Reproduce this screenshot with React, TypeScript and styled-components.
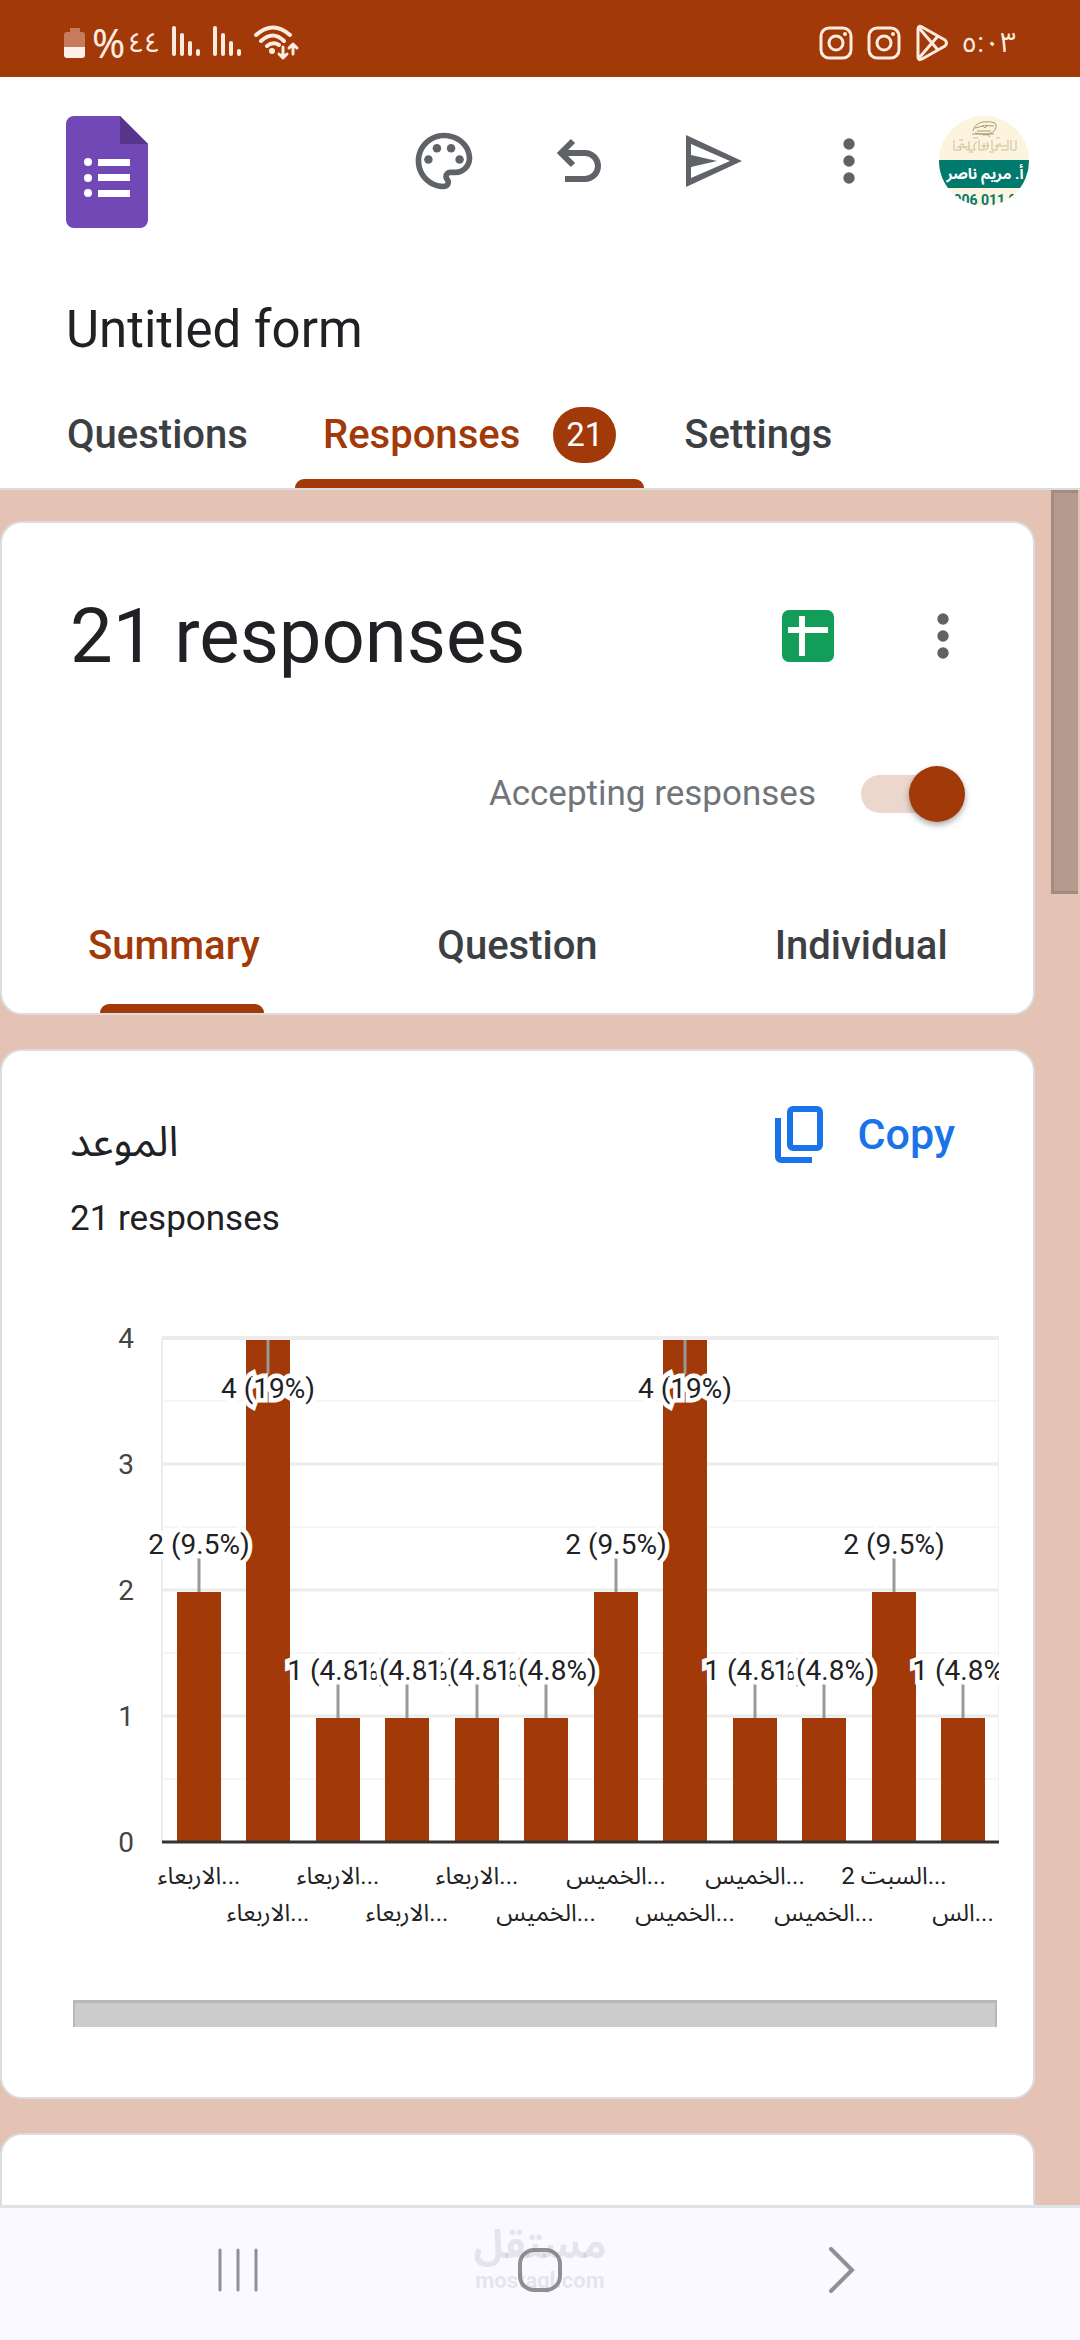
import { useState } from "react";
import styled, { createGlobalStyle, css } from "styled-components";

const colors = {
  accent: "#a23908",
  accentSoft: "#ebd7cd",
  backdrop: "#e4c3b5",
  border: "#dadce0",
  text: "#202124",
  tab: "#3c4043",
  icon: "#5f6368",
  hint: "#70757a",
  link: "#1a73e8",
  status: "#fdebe0",
  nav: "#faf9ff",
  navIcon: "#909092",
};

const fontStack = `Roboto, "Noto Sans Arabic", "Noto Naskh Arabic", "DejaVu Sans", sans-serif`;

const GlobalStyle = createGlobalStyle`
  * {
    box-sizing: border-box;
  }
  body {
    margin: 0;
    color: ${colors.text};
    font-family: ${fontStack};
  }
  h1, h2, p {
    margin: 0;
    font-weight: 400;
  }
  svg {
    display: block;
    flex-shrink: 0;
  }
`;

interface Answer {
  label: string;
  count: number;
  percent: string;
}

const answers: Answer[] = [
  { label: "الاربعاء...", count: 2, percent: "9.5%" },
  { label: "الاربعاء...", count: 4, percent: "19%" },
  { label: "الاربعاء...", count: 1, percent: "4.8%" },
  { label: "الاربعاء...", count: 1, percent: "4.8%" },
  { label: "الاربعاء...", count: 1, percent: "4.8%" },
  { label: "الخميس...", count: 1, percent: "4.8%" },
  { label: "الخميس...", count: 2, percent: "9.5%" },
  { label: "الخميس...", count: 4, percent: "19%" },
  { label: "الخميس...", count: 1, percent: "4.8%" },
  { label: "الخميس...", count: 1, percent: "4.8%" },
  { label: "السبت 2...", count: 2, percent: "9.5%" },
  { label: "الس...", count: 1, percent: "4.8%" },
];

const views = ["Summary", "Question", "Individual"];

const BatteryIcon = () => (
  <svg width="22" height="32" viewBox="0 0 22 32" aria-hidden>
    <path d="M6 1h10v4h2a3 3 0 0 1 3 3v12H0V8a3 3 0 0 1 3-3h3z" fill="#c67c5c" />
    <path d="M0 20h21v8a3 3 0 0 1-3 3H3a3 3 0 0 1-3-3z" fill="#fdf1ea" />
  </svg>
);

const SignalIcon = () => (
  <svg width="28" height="32" viewBox="0 0 28 32" aria-hidden>
    <path
      d="M2 3v26M10 10v19M18 18v11M26 26v3"
      stroke={colors.status}
      strokeWidth="4"
      strokeLinecap="round"
    />
  </svg>
);

const WifiIcon = () => (
  <svg width="46" height="36" viewBox="0 0 46 36" fill="none" aria-hidden>
    <g stroke={colors.status} strokeWidth="4" strokeLinecap="round" strokeLinejoin="round">
      <path d="M2 10Q19-5 36 10M7 16Q19 5 30 16M13 21Q19 16 25 20" />
      <path d="M29 22v10M25 29l4 4 4-4M39 29V20M35 23l4-4 4 4" strokeWidth="3" />
    </g>
    <circle cx="18" cy="26" r="3" fill={colors.status} />
  </svg>
);

const InstagramIcon = () => (
  <svg width="34" height="34" viewBox="0 0 34 34" fill="none" aria-hidden>
    <g stroke={colors.status} strokeWidth="3">
      <rect x="2" y="2" width="30" height="30" rx="8" />
      <circle cx="17" cy="17" r="7" />
    </g>
    <circle cx="26" cy="8" r="2" fill={colors.status} />
  </svg>
);

const PlayStoreIcon = () => (
  <svg width="34" height="38" viewBox="0 0 34 38" fill="none" aria-hidden>
    <path
      d="M3 5Q3 1 7 3L30 16Q33 19 30 22L7 35Q3 37 3 33ZM4 4L23 26M4 34L23 12"
      stroke={colors.status}
      strokeWidth="3"
      strokeLinejoin="round"
    />
  </svg>
);

const FormsLogo = () => (
  <svg width="82" height="112" viewBox="0 0 82 112" aria-label="Forms" role="img">
    <path
      d="M8 0h46l28 28v76a8 8 0 0 1-8 8H8a8 8 0 0 1-8-8V8a8 8 0 0 1 8-8z"
      fill="#7248b6"
    />
    <path d="M54 0l28 28H54z" fill="#56358a" />
    <g fill="#fff">
      <circle cx="22" cy="46" r="4" />
      <circle cx="22" cy="62" r="4" />
      <circle cx="22" cy="77" r="4" />
      <path d="M32 43h32v7H32zM32 58h32v7H32zM32 74h32v7H32z" />
    </g>
  </svg>
);

const PaletteIcon = () => (
  <svg width="68" height="68" viewBox="0 0 24 24" fill={colors.icon} aria-hidden>
    <path d="M12 22C6.49 22 2 17.51 2 12S6.49 2 12 2s10 4.04 10 9c0 3.31-2.69 6-6 6h-1.77c-.28 0-.5.22-.5.5 0 .12.05.23.13.33.41.47.64 1.06.64 1.67A2.5 2.5 0 0 1 12 22zm0-18c-4.41 0-8 3.59-8 8s3.59 8 8 8c.28 0 .5-.22.5-.5a.54.54 0 0 0-.14-.35c-.41-.46-.63-1.05-.63-1.65a2.5 2.5 0 0 1 2.5-2.5H16c2.21 0 4-1.79 4-4 0-3.86-3.59-7-8-7z" />
    <circle cx="6.5" cy="11.5" r="1.5" />
    <circle cx="9.5" cy="7.5" r="1.5" />
    <circle cx="14.5" cy="7.5" r="1.5" />
    <circle cx="17.5" cy="11.5" r="1.5" />
  </svg>
);

const UndoIcon = () => (
  <svg width="46" height="46" viewBox="0 0 46 46" fill="none" aria-hidden>
    <path
      d="M17 3L5 15l12 12M5 15h24a13 13 0 0 1 0 26H9"
      stroke={colors.icon}
      strokeWidth="6"
    />
  </svg>
);

const SendIcon = () => (
  <svg width="56" height="52" viewBox="0 0 56 52" fill={colors.icon} aria-hidden>
    <path d="M0 0l56 26L0 52zM5 9v34l39-17z" fillRule="evenodd" />
    <path d="M5 20l26 6-26 6z" />
  </svg>
);

const MoreIcon = () => (
  <svg width="12" height="46" viewBox="0 0 12 46" fill={colors.icon} aria-hidden>
    <circle cx="6" cy="6" r="5.7" />
    <circle cx="6" cy="23" r="5.7" />
    <circle cx="6" cy="40" r="5.7" />
  </svg>
);

const SheetsIcon = () => (
  <svg width="52" height="52" viewBox="0 0 52 52" aria-hidden>
    <rect width="52" height="52" rx="7" fill="#129d58" />
    <path d="M6 17h40v6H23v23h-6V23H6zM17 6h6v12h-6z" fill="#fff" />
  </svg>
);

const CopyIcon = () => (
  <svg width="48" height="57" viewBox="0 0 48 57" fill="none" aria-hidden>
    <g stroke={colors.link} strokeWidth="6">
      <rect x="15" y="3" width="30" height="39" rx="3" />
      <path d="M3 12v39a3 3 0 0 0 3 3h31" />
    </g>
  </svg>
);

const Avatar = () => (
  <svg width="90" height="90" viewBox="0 0 90 90" role="img" aria-label="Account">
    <clipPath id="avatar-clip">
      <circle cx="45" cy="45" r="45" />
    </clipPath>
    <g clipPath="url(#avatar-clip)">
      <rect width="90" height="90" fill="#fcf4df" />
      <path
        d="M34 15q2-8 10-9t12 1q3 5-2 9t-18 1M36 12q10-4 19-2M33 18h22M44 19q8-1 6 2M43 9l3 3 3-3M38 15h14"
        stroke="#aa9a70"
        strokeWidth="1"
        fill="none"
      />
      <path
        d="M15 24v10h7q-3-6 2-6 2 7 6 6v-9M30 34h6q-3-6 2-8M40 24v10h5v-7M46 34q5-1 2-8M53 24v10h5q-1-7 4-6M62 34h7V24M20 24h4M34 22h5M57 22h4M30 36h4M50 36h5M72 24v10h5V24M18 31h12M42 30h8M56 30h12"
        stroke="#c9bd98"
        strokeWidth="1"
        fill="none"
      />
      <rect y="44" width="90" height="28" fill="#007a6c" />
      <text x="46" y="63" textAnchor="middle" fontSize="15" fontWeight="700" fill="#fff">
        أ. مريم ناصر
      </text>
      <text x="46" y="89" textAnchor="middle" fontSize="14" fontWeight="700" fill="#007a6c">
        906 011 9
      </text>
    </g>
  </svg>
);

// Plot geometry, in the chart's own coordinate space
const plot = { left: 91, right: 928, top: 38, bottom: 542, first: 128, step: 69.5, bar: 44 };
const unit = (plot.bottom - plot.top) / 4;

const barCenter = (i: number) => Math.floor(plot.first + plot.step * i);

const ResponseChart = () => (
  <ChartSvg viewBox="0 0 928 660" role="img" aria-label="Responses by appointment">
    {[0, 1, 2, 3].map((n) => {
      const y = plot.top + unit * (n + 0.5);
      return <line key={n} x1={plot.left} x2={plot.right} y1={y} y2={y} stroke="#f6f6f6" strokeWidth="2" />;
    })}
    {[1, 2, 3, 4].map((n) => {
      const y = plot.bottom - unit * n;
      return (
        <line key={n} x1={plot.left} x2={plot.right} y1={y} y2={y} stroke="#ececec" strokeWidth={n === 4 ? 4 : 3} />
      );
    })}
    <line x1={plot.left} x2={plot.left} y1={plot.top} y2={plot.bottom} stroke="#ececec" strokeWidth="2" />
    <line x1={plot.right} x2={plot.right} y1={plot.top} y2={plot.bottom} stroke="#f0f0f0" strokeWidth="2" />
    {[0, 1, 2, 3, 4].map((n) => (
      <AxisText key={n} x="55" y={plot.bottom - unit * n + 10} textAnchor="middle">
        {n}
      </AxisText>
    ))}
    {answers.map(({ count }, i) => {
      const y = plot.bottom - unit * count + 2;
      return (
        <rect
          key={i}
          x={barCenter(i) - plot.bar / 2}
          y={y}
          width={plot.bar}
          height={plot.bottom - y}
          fill={colors.accent}
        />
      );
    })}
    <line x1={plot.left} x2={plot.right} y1={plot.bottom} y2={plot.bottom} stroke="#333" strokeWidth="3" />
    {answers.map(({ count, percent, label }, i) => {
      const x = barCenter(i);
      const top = plot.bottom - unit * count + 2;
      // A full-height bar has no room above it, so its label hangs inside
      const inside = count === 4;
      return (
        <g key={i}>
          <line x1={x} x2={x} y1={top} y2={inside ? top + 34 : top - 34} stroke="#999" strokeWidth="3" />
          <ValueText x={x} y={inside ? top + 58 : top - 38} textAnchor="middle">
            {count} ({percent})
          </ValueText>
          <CategoryText x={x} y={i % 2 ? 621 : 584} textAnchor="middle">
            {label}
          </CategoryText>
        </g>
      );
    })}
  </ChartSvg>
);

const App = () => {
  const [accepting, setAccepting] = useState(true);

  return (
    <Screen>
      <GlobalStyle />
      <StatusBar>
        <StatusGroup>
          <BatteryIcon />
          <BatteryLevel>
            %<ArabicDigits>٤٤</ArabicDigits>
          </BatteryLevel>
          <Signals>
            <SignalIcon />
            <SignalIcon />
            <WifiIcon />
          </Signals>
        </StatusGroup>
        <StatusGroup>
          <Notifications>
            <InstagramIcon />
            <InstagramIcon />
            <PlayStoreIcon />
          </Notifications>
          <ArabicDigits>٥:٠٣</ArabicDigits>
        </StatusGroup>
      </StatusBar>

      <Header>
        <Toolbar>
          <LogoLink href="#forms">
            <FormsLogo />
          </LogoLink>
          <Actions>
            <IconButton aria-label="Customize theme">
              <PaletteIcon />
            </IconButton>
            <IconButton aria-label="Undo">
              <UndoIcon />
            </IconButton>
            <IconButton aria-label="Send">
              <SendIcon />
            </IconButton>
            <IconButton aria-label="More">
              <MoreIcon />
            </IconButton>
            <IconButton aria-label="Google Account">
              <Avatar />
            </IconButton>
          </Actions>
        </Toolbar>
        <FormTitle>Untitled form</FormTitle>
        <FormTabs>
          <FormTab>Questions</FormTab>
          <FormTab $active>
            Responses
            <Badge>21</Badge>
          </FormTab>
          <FormTab>Settings</FormTab>
        </FormTabs>
      </Header>

      <ScrollArea>
        <Cards>
          <Card>
            <SummaryHead>
              <ResponseCount>21 responses</ResponseCount>
              <Actions>
                <IconButton aria-label="View in Sheets">
                  <SheetsIcon />
                </IconButton>
                <IconButton aria-label="More options">
                  <MoreIcon />
                </IconButton>
              </Actions>
            </SummaryHead>
            <AcceptRow>
              <AcceptLabel htmlFor="accepting">Accepting responses</AcceptLabel>
              <Switch
                id="accepting"
                type="checkbox"
                checked={accepting}
                onChange={(e) => setAccepting(e.target.checked)}
              />
            </AcceptRow>
            <ViewTabs>
              {views.map((view, i) => (
                <ViewTab key={view} $active={i === 0}>
                  {view}
                </ViewTab>
              ))}
            </ViewTabs>
          </Card>

          <Card>
            <QuestionHead>
              <QuestionTitle>الموعد</QuestionTitle>
              <CopyButton>
                <CopyIcon />
                Copy
              </CopyButton>
            </QuestionHead>
            <QuestionCount>21 responses</QuestionCount>
            <ChartFrame>
              <ResponseChart />
              <ChartScrollbar />
            </ChartFrame>
          </Card>

          <Card>
            <EmptyQuestion />
          </Card>
        </Cards>
        <Gutter>
          <PageThumb />
        </Gutter>
      </ScrollArea>

      <NavBar>
        <NavButton aria-label="Recent apps">
          <svg width="40" height="44" viewBox="0 0 40 44" aria-hidden>
            <path d="M2 2v40M20 2v40M38 2v40" stroke={colors.navIcon} strokeWidth="3" strokeLinecap="round" />
          </svg>
        </NavButton>
        <NavButton aria-label="Home">
          <svg width="44" height="44" viewBox="0 0 44 44" fill="none" aria-hidden>
            <rect x="2" y="2" width="40" height="40" rx="14" stroke={colors.navIcon} strokeWidth="4" />
          </svg>
        </NavButton>
        <NavButton aria-label="Back">
          <svg width="26" height="46" viewBox="0 0 26 46" fill="none" aria-hidden>
            <path d="M2 2l21 21L2 44" stroke={colors.navIcon} strokeWidth="4" strokeLinecap="round" />
          </svg>
        </NavButton>
        <Watermark>
          <WatermarkName>مستقل</WatermarkName>
          <WatermarkSite>mostaql.com</WatermarkSite>
        </Watermark>
      </NavBar>
    </Screen>
  );
};

export default App;

const Screen = styled.div`
  display: flex;
  flex-direction: column;
  height: 100vh;
  overflow: hidden;
  background: ${colors.backdrop};
`;

const cssButtonReset = css`
  padding: 0;
  border: 0;
  background: none;
  font-family: inherit;
  cursor: pointer;
`;

const StatusBar = styled.div`
  display: flex;
  flex-shrink: 0;
  align-items: center;
  justify-content: space-between;
  height: 77px;
  padding: 8px 64px 0;
  background: ${colors.accent};
  color: ${colors.status};
`;

const StatusGroup = styled.div`
  display: flex;
  align-items: center;
  gap: 12px;
`;

const BatteryLevel = styled.span`
  display: flex;
  align-items: center;
  gap: 3px;
  margin-left: -6px;
  font-family: "Noto Sans", ${fontStack};
  font-size: 40px;
  line-height: 40px;
`;

const ArabicDigits = styled.span`
  font-family: ${fontStack};
  font-size: 28px;
  line-height: 40px;
`;

const Signals = styled.div`
  display: flex;
  gap: 13px;
`;

const Notifications = styled.div`
  display: flex;
  align-items: center;
  gap: 14px;
`;

const Header = styled.header`
  flex-shrink: 0;
  border-bottom: 2px solid ${colors.border};
  background: #fff;
`;

const Toolbar = styled.div`
  display: flex;
  align-items: flex-start;
  justify-content: space-between;
  padding: 39px 51px 0 66px;
`;

const LogoLink = styled.a`
  display: block;
`;

const Actions = styled.div`
  display: flex;
  gap: 45px;
`;

const IconButton = styled.button`
  ${cssButtonReset}
  display: flex;
  align-items: center;
  justify-content: center;
  width: 90px;
  height: 90px;
`;

const FormTitle = styled.h1`
  padding: 72px 66px 0;
  font-size: 51px;
  line-height: 60px;
`;

const FormTabs = styled.nav`
  display: flex;
  gap: 12px;
  padding: 22px 39px 0;
`;

const cssTab = css<{ $active?: boolean }>`
  ${cssButtonReset}
  position: relative;
  color: ${({ $active }) => ($active ? colors.accent : colors.tab)};
  font-size: 40px;
  font-weight: 500;
  line-height: 48px;

  &::after {
    content: "";
    position: absolute;
    right: 0;
    bottom: 0;
    left: 0;
    display: ${({ $active }) => ($active ? "block" : "none")};
    height: 9px;
    border-radius: 9px 9px 0 0;
    background: ${colors.accent};
  }
`;

const FormTab = styled.button<{ $active?: boolean }>`
  ${cssTab}
  display: flex;
  align-items: center;
  gap: 33px;
  min-width: 244px;
  height: 106px;
  padding: 0 28px;
`;

const Badge = styled.span`
  padding: 0 13px;
  border-radius: 28px;
  background: ${colors.accent};
  color: #fff;
  font-size: 33px;
  font-weight: 400;
  line-height: 56px;
`;

const ScrollArea = styled.main`
  display: flex;
  flex: 1;
  min-height: 0;
  overflow: hidden;
`;

const Cards = styled.div`
  display: flex;
  flex: 1;
  flex-direction: column;
  gap: 34px;
  min-width: 0;
  padding-top: 31px;
`;

const Card = styled.section`
  flex-shrink: 0;
  border: 2px solid ${colors.border};
  border-radius: 22px;
  background: #fff;
  overflow: hidden;
`;

const SummaryHead = styled.div`
  display: flex;
  align-items: center;
  justify-content: space-between;
  padding: 68px 45px 0 68px;
`;

const ResponseCount = styled.h2`
  font-size: 76px;
  line-height: 90px;
`;

const AcceptRow = styled.div`
  display: flex;
  align-items: center;
  justify-content: flex-end;
  gap: 45px;
  padding: 85px 68px 0;
`;

const AcceptLabel = styled.label`
  color: ${colors.hint};
  font-size: 35px;
  line-height: 42px;
`;

const Switch = styled.input`
  position: relative;
  appearance: none;
  width: 104px;
  height: 56px;
  margin: 0;
  cursor: pointer;

  &::before {
    content: "";
    position: absolute;
    inset: 9px 9px 9px 0;
    border-radius: 19px;
    background: ${colors.accentSoft};
  }

  &::after {
    content: "";
    position: absolute;
    top: 0;
    left: 0;
    width: 56px;
    height: 56px;
    border-radius: 50%;
    background: ${colors.icon};
    box-shadow: 0 3px 6px rgba(0, 0, 0, 0.35);
  }

  &:checked::after {
    left: 48px;
    background: ${colors.accent};
  }
`;

const ViewTabs = styled.nav`
  display: grid;
  grid-template-columns: repeat(3, 1fr);
  padding-top: 57px;
`;

const ViewTab = styled.button<{ $active?: boolean }>`
  ${cssTab}
  height: 134px;

  &::after {
    right: 82px;
    left: 98px;
  }
`;

const QuestionHead = styled.div`
  display: flex;
  align-items: center;
  justify-content: space-between;
  padding: 38px 78px 0 68px;
`;

const QuestionTitle = styled.h2`
  padding-top: 16px;
  font-size: 42px;
  line-height: 48px;
`;

const CopyButton = styled.button`
  ${cssButtonReset}
  display: flex;
  align-items: center;
  gap: 35px;
  height: 90px;
  color: ${colors.link};
  font-size: 43px;
  font-weight: 500;
  line-height: 48px;
`;

const QuestionCount = styled.p`
  padding: 19px 68px 0;
  font-size: 35px;
  line-height: 42px;
`;

const ChartFrame = styled.div`
  padding: 60px 34px 70px 69px;
`;

const ChartSvg = styled.svg`
  width: 100%;
  height: auto;
  overflow: hidden;
`;

const AxisText = styled.text`
  fill: #444;
  font-size: 28px;
`;

const ValueText = styled.text`
  fill: ${colors.text};
  stroke: #fff;
  stroke-width: 9px;
  paint-order: stroke;
  font-size: 28px;
`;

const CategoryText = styled.text`
  fill: #222;
  font-size: 24px;
`;

const ChartScrollbar = styled.div`
  height: 27px;
  margin: 40px 2px 0;
  border: solid #b8b8b8;
  border-width: 3px 2px 0;
  background: #ccc;
`;

const EmptyQuestion = styled.div`
  height: 240px;
`;

const Gutter = styled.div`
  flex-shrink: 0;
  width: 45px;
  padding: 0 2px 0 16px;
`;

const PageThumb = styled.div`
  height: 404px;
  border: solid #a48b7f;
  border-width: 3px 0 3px 3px;
  background: #b59b8e;
`;

const NavBar = styled.nav`
  position: relative;
  display: grid;
  flex-shrink: 0;
  grid-template-columns: repeat(3, 1fr);
  height: 135px;
  padding: 0 87px 8px;
  border-top: 3px solid #e1e1e8;
  background: ${colors.nav};
`;

const NavButton = styled.button`
  ${cssButtonReset}
  display: flex;
  align-items: center;
  justify-content: center;
`;

const Watermark = styled.div`
  position: absolute;
  inset: 12px 0 auto;
  color: rgba(120, 120, 130, 0.17);
  text-align: center;
  pointer-events: none;
`;

const WatermarkName = styled.p`
  font-size: 40px;
  font-weight: 700;
  line-height: 50px;
`;

const WatermarkSite = styled.p`
  font-size: 22px;
  font-weight: 700;
  line-height: 22px;
`;
